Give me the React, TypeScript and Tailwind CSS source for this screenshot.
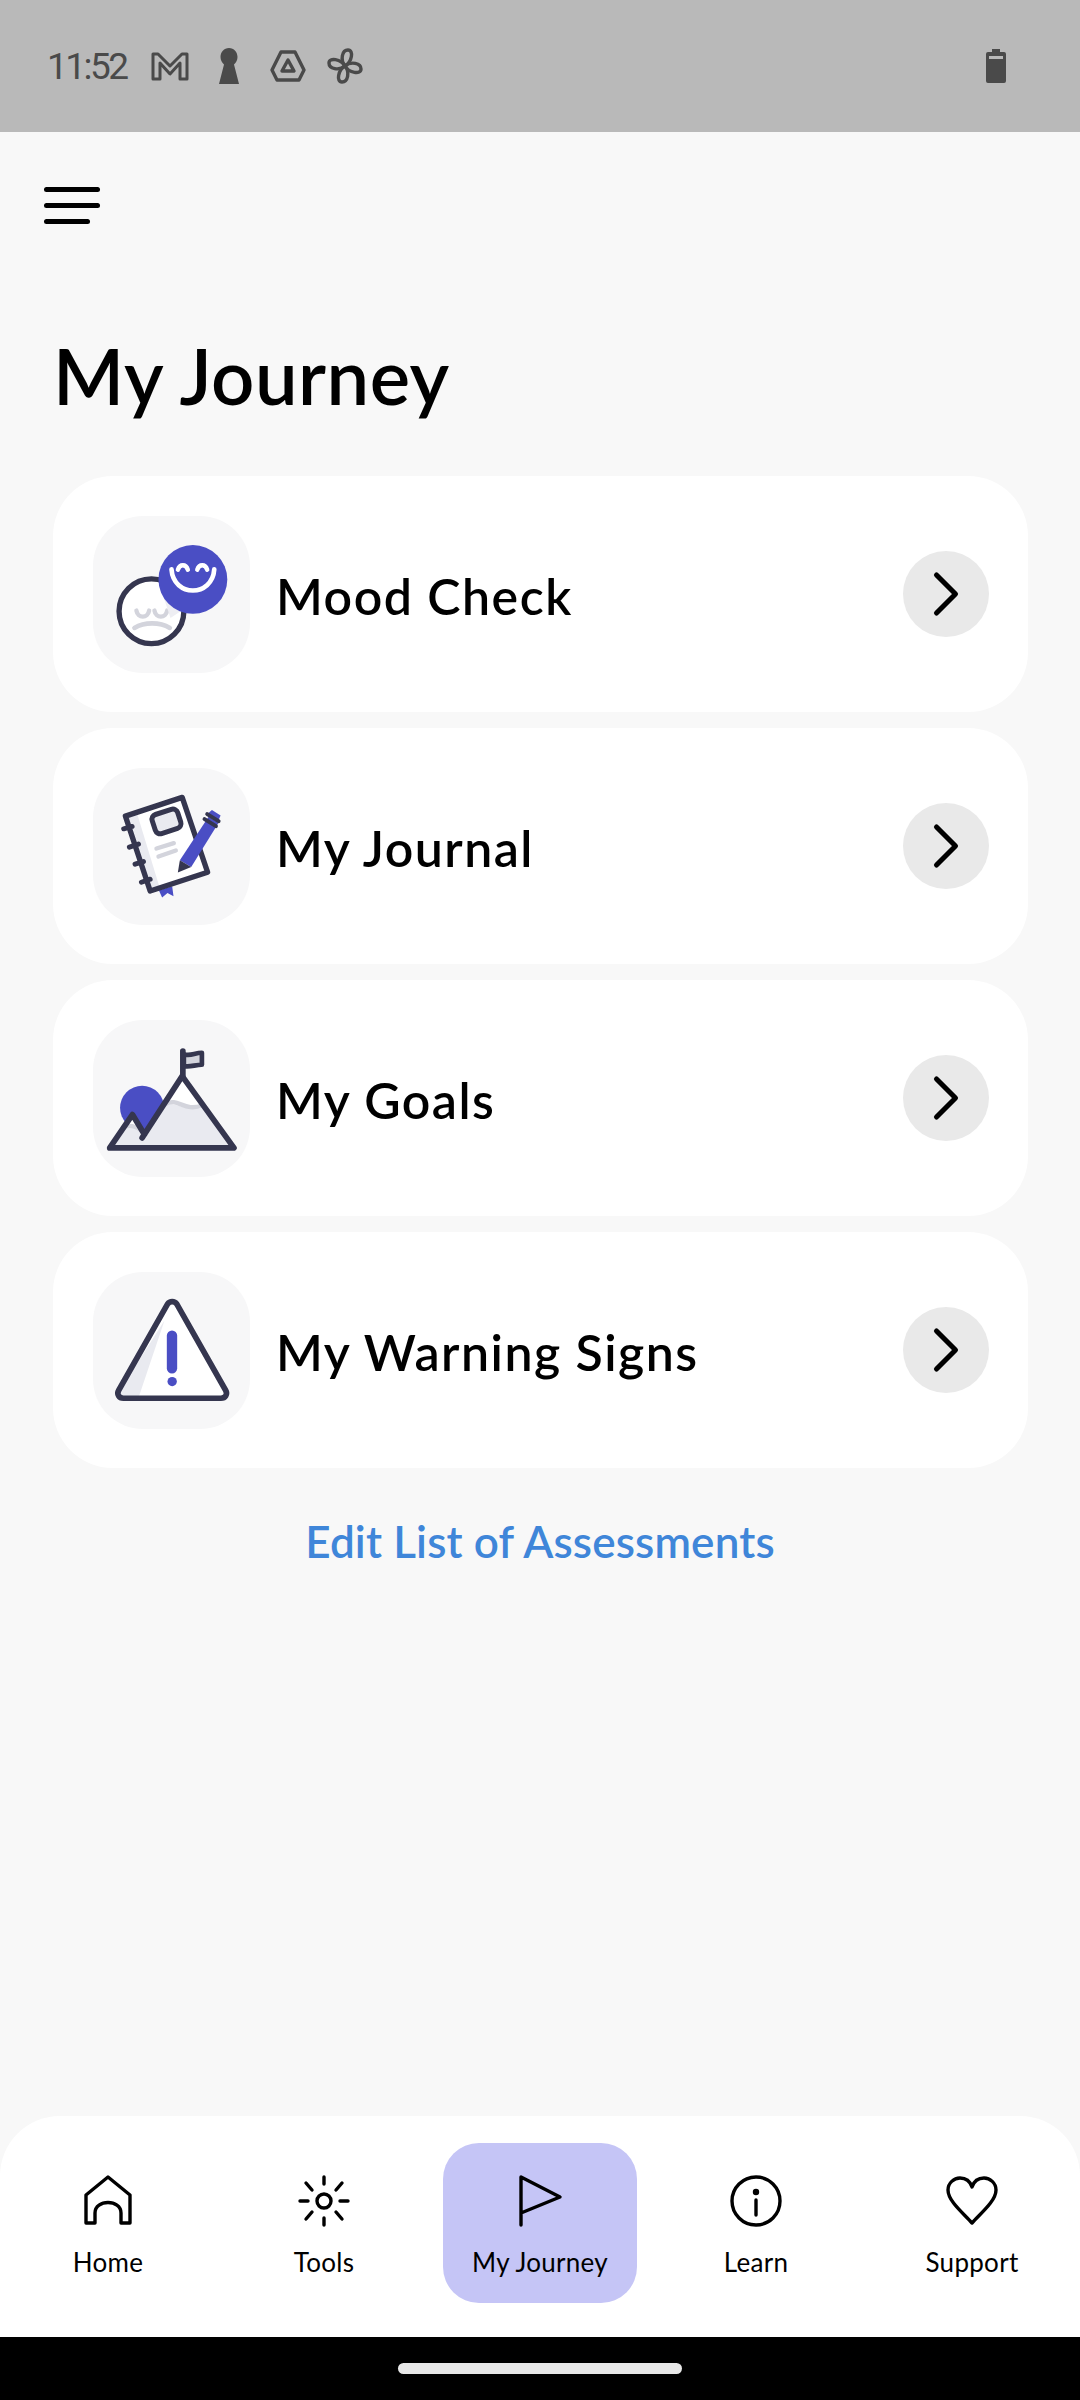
import { ChevronRight } from "lucide-react";
import type { ReactNode } from "react";

const INK = "#35364f";
const BLUE = "#4a4ec4";
const LIGHT = "#e9eaf0";
const MID = "#d3d4dc";

function MoodIcon() {
  return (
    <svg viewBox="68 75 470 470" className="h-full w-full">
      <circle cx="243" cy="360" r="97" fill="#fff" stroke={INK} strokeWidth="16" />
      <path d="M198 358c4 24 34 24 38 0M252 358c4 24 34 24 38 0" fill="none" stroke={MID} strokeWidth="13" strokeLinecap="round" />
      <path d="M192 410c30-18 76-18 106 0" fill="none" stroke={MID} strokeWidth="14" strokeLinecap="round" />
      <path d="M280 320l50 40-30 20z" fill="#eeeef3" />
      <circle cx="367" cy="265" r="103" fill={BLUE} />
      <path d="M303 235c6 84 122 84 128 0" fill="none" stroke="#fff" strokeWidth="14" strokeLinecap="round" />
      <path d="M322 236c6-18 24-18 30 0M380 236c6-18 24-18 30 0" fill="none" stroke="#fff" strokeWidth="13" strokeLinecap="round" />
    </svg>
  );
}

function JournalIcon() {
  return (
    <svg viewBox="68 68 470 470" className="h-full w-full">
      <path d="M265 434l40-12 4 30-18-10-16 14z" fill={BLUE} />
      <path d="M165 212L335 156l76 224-172 56z" fill="#fff" />
      <path d="M165 212l34-11 68 223-28 12z" fill={LIGHT} />
      <path d="M165 212L335 156l76 224-172 56z" fill="none" stroke={INK} strokeWidth="16" strokeLinejoin="round" />
      <rect x="248" y="198" width="80" height="60" rx="15" transform="rotate(-18 288 228)" fill={LIGHT} stroke={INK} strokeWidth="15" />
      <path d="M258 309l52-16M264 333l52-18" stroke={MID} strokeWidth="13" strokeLinecap="round" />
      <path d="M160 250l25-7M177 305l27-9M194 356l25-8M213 410l26-9" stroke={INK} strokeWidth="15" strokeLinecap="round" />
      <path d="M414 214l30 18-82 132-34-20z" fill={BLUE} />
      <path d="M424 194l26 16-6 14-32-20z" fill={BLUE} />
      <path d="M328 344l34 20-40 17z" fill={INK} />
      <path d="M410 206l34 21M402 221l34 21" stroke={INK} strokeWidth="12" strokeLinecap="round" />
    </svg>
  );
}

function GoalsIcon() {
  return (
    <svg viewBox="68 72 470 470" className="h-full w-full">
      <circle cx="215" cy="335" r="66" fill={BLUE} />
      <path d="M118 455l68-100 36 62 112-172 156 210z" fill="#fff" />
      <path d="M276 328c30-22 60 26 112-4l102 131H118l36-52c22-16 46-12 64 8z" fill={LIGHT} />
      <path d="M288 322c34-18 56 28 108 4" fill="none" stroke={MID} strokeWidth="13" strokeLinecap="round" />
      <path d="M160 392c18-6 36-2 52 10" fill="none" stroke={MID} strokeWidth="13" strokeLinecap="round" />
      <path d="M215 425L335 240l155 215H118l68-100 36 60" fill="none" stroke={INK} strokeWidth="17" strokeLinecap="round" strokeLinejoin="round" />
      <path d="M337 165v75" stroke={INK} strokeWidth="17" strokeLinecap="round" />
      <path d="M340 174c18 8 32-4 54-4v36c-20 0-36 8-54 4z" fill={MID} stroke={INK} strokeWidth="14" strokeLinejoin="round" />
    </svg>
  );
}

function WarningIcon() {
  return (
    <svg viewBox="68 80 470 470" className="h-full w-full">
      <path d="M291 176c7-10 21-10 28 0l146 258c7 12-1 24-14 24H159c-13 0-21-12-14-24z" fill="#fff" />
      <path d="M282 225l-76 226h-48c-10 0-14-8-10-16z" fill={LIGHT} />
      <path d="M291 176c7-10 21-10 28 0l146 258c7 12-1 24-14 24H159c-13 0-21-12-14-24z" fill="none" stroke={INK} strokeWidth="17" strokeLinejoin="round" />
      <rect x="289" y="255" width="31" height="129" rx="15.5" fill={BLUE} />
      <circle cx="305" cy="408" r="14" fill={BLUE} />
    </svg>
  );
}

const ITEMS: { label: string; icon: ReactNode }[] = [
  { label: "Mood Check", icon: <MoodIcon /> },
  { label: "My Journal", icon: <JournalIcon /> },
  { label: "My Goals", icon: <GoalsIcon /> },
  { label: "My Warning Signs", icon: <WarningIcon /> },
];

function StatusIcons() {
  return (
    <div className="flex items-center text-[#4a4a4a]">
      <span className="w-[79px] font-['Roboto',sans-serif] text-[37px] leading-none tracking-[-2.5px]">11:52</span>
      <svg width="38" height="30" viewBox="0 0 38 30" className="ml-[25px]" fill="none" stroke="currentColor" strokeWidth="3" strokeLinejoin="round">
        <path d="M2 28V3h5l12 12L31 3h5v25h-7V12L19 23 9 12v16z" />
      </svg>
      <svg width="20" height="36" viewBox="0 0 20 36" className="ml-[30px]" fill="currentColor">
        <path d="M10 0c5 0 8.500 4 8.500 9 0 3-1.500 6-3.500 7.500L20 36H0l5-19.500C3 15 1.500 12 1.500 9 1.500 4 5 0 10 0z" />
      </svg>
      <svg width="36" height="32" viewBox="0 0 36 32" className="ml-[31px]" fill="none" stroke="currentColor" strokeWidth="3.400" strokeLinejoin="round">
        <path d="M11 2h14l9 18-5 10H7L2 20z" />
        <path d="M18 10l6 11H12z" />
      </svg>
      <svg width="36" height="36" viewBox="0 0 36 36" className="ml-[21px]" fill="none" stroke="currentColor" strokeWidth="3.400">
        <path d="M18 18C13 12 15 2 21 2c6 0 4 12-3 16z" />
        <path d="M18 18c6-5 16-3 16 3 0 6-12 4-16-3z" />
        <path d="M18 18c5 6 3 16-3 16-6 0-4-12 3-16z" />
        <path d="M18 18c-6 5-16 3-16-3 0-6 12-4 16 3z" />
      </svg>
    </div>
  );
}

function NavIcon({ name }: { name: string }) {
  const props = { width: 52, height: 52, viewBox: "0 0 52 52", fill: "none", stroke: "#000", strokeWidth: 3.4, strokeLinecap: "round" as const, strokeLinejoin: "round" as const };
  if (name === "Home")
    return (
      <svg {...props}>
        <path d="M4 48V20L26 2l22 18v28H39V38c0-14-26-14-26 0v10z" />
      </svg>
    );
  if (name === "Tools")
    return (
      <svg {...props}>
        <circle cx="26" cy="26" r="7" />
        <path d="M26 2v7M26 43v7M2 26h8M42 26h8M8 8l6 7M44 8l-6 7M8 44l6-7M44 44l-6-7" />
      </svg>
    );
  if (name === "My Journey")
    return (
      <svg {...props}>
        <path d="M7 50V2l39 20L7 38" />
      </svg>
    );
  if (name === "Learn")
    return (
      <svg {...props}>
        <circle cx="26" cy="26" r="24" />
        <path d="M26 25v15" />
        <circle cx="26" cy="17" r="1.500" fill="#000" />
      </svg>
    );
  return (
    <svg {...props}>
      <path d="M26 48C17 38 2 26 2 15 2 8 8 3 14 3c6 0 10 3 12 9 2-6 6-9 12-9 6 0 12 5 12 12 0 11-15 23-24 33z" />
    </svg>
  );
}

const NAV = ["Home", "Tools", "My Journey", "Learn", "Support"];

export default function App() {
  return (
    <div className="flex h-[2400px] w-[1080px] flex-col overflow-hidden bg-[#f8f8f8] font-['Lato',sans-serif] text-black">
      {/* Status bar */}
      <div className="flex h-[132px] shrink-0 items-center justify-between bg-[#b9b9b9] pl-[47px] pr-[74px]">
        <StatusIcons />
        <svg width="20" height="34" viewBox="0 0 20 34" fill="#4a4a4a">
          <path d="M6 0h8v3h4a2 2 0 0 1 2 2v27a2 2 0 0 1-2 2H2a2 2 0 0 1-2-2V5a2 2 0 0 1 2-2h4z" />
          <rect x="3" y="7" width="14" height="3" fill="#b9b9b9" />
        </svg>
      </div>

      <main className="flex min-h-0 flex-1 flex-col">
        {/* Hamburger */}
        <div className="flex flex-col gap-[11px] pl-[44px] pt-[55px]">
          <div className="h-[5px] w-[56px] rounded-full bg-black" />
          <div className="h-[5px] w-[56px] rounded-full bg-black" />
          <div className="h-[5px] w-[46px] rounded-full bg-black" />
        </div>

        <h1 className="pl-[53px] pt-[107px] text-[76px] font-semibold leading-[90px] tracking-[0.5px]">My Journey</h1>

        {/* Cards */}
        <div className="mt-[55px] flex flex-col gap-[16px] pl-[53px] pr-[52px]">
          {ITEMS.map((item) => (
            <div key={item.label} className="flex h-[236px] items-center rounded-[60px] bg-white pl-[40px] pr-[39px]">
              <div className="h-[157px] w-[157px] shrink-0 overflow-hidden rounded-[50px] bg-[#f7f7f8]">{item.icon}</div>
              <span className="ml-[26px] flex-1 pt-[4px] text-[50px] font-semibold leading-none tracking-[1.5px]">{item.label}</span>
              <div className="flex h-[86px] w-[86px] items-center justify-center rounded-full bg-[#e9e9e9]">
                <ChevronRight size={76} strokeWidth={1.6} color="#000" />
              </div>
            </div>
          ))}
        </div>

        <p className="mt-[48px] text-center text-[44px] font-semibold leading-[50px] tracking-[0.15px] text-[#3f86d9]">Edit List of Assessments</p>
      </main>

      {/* Bottom nav */}
      <nav className="grid h-[221px] shrink-0 grid-cols-5 rounded-t-[60px] bg-white pt-[27px]">
        {NAV.map((name) => (
          <div key={name} className="flex justify-center">
            <div className={`flex h-[160px] w-[194px] flex-col items-center rounded-[36px] pt-[32px] ${name === "My Journey" ? "bg-[#c5c5f6]" : ""}`}>
              <NavIcon name={name} />
              <span className="mt-[18px] text-[26px] font-normal leading-[34px] tracking-[0.3px]">{name}</span>
            </div>
          </div>
        ))}
      </nav>

      {/* Gesture bar */}
      <div className="flex h-[63px] shrink-0 justify-center bg-black pt-[26px]">
        <div className="h-[11px] w-[284px] rounded-full bg-[#e8e8e8]" />
      </div>
    </div>
  );
}
